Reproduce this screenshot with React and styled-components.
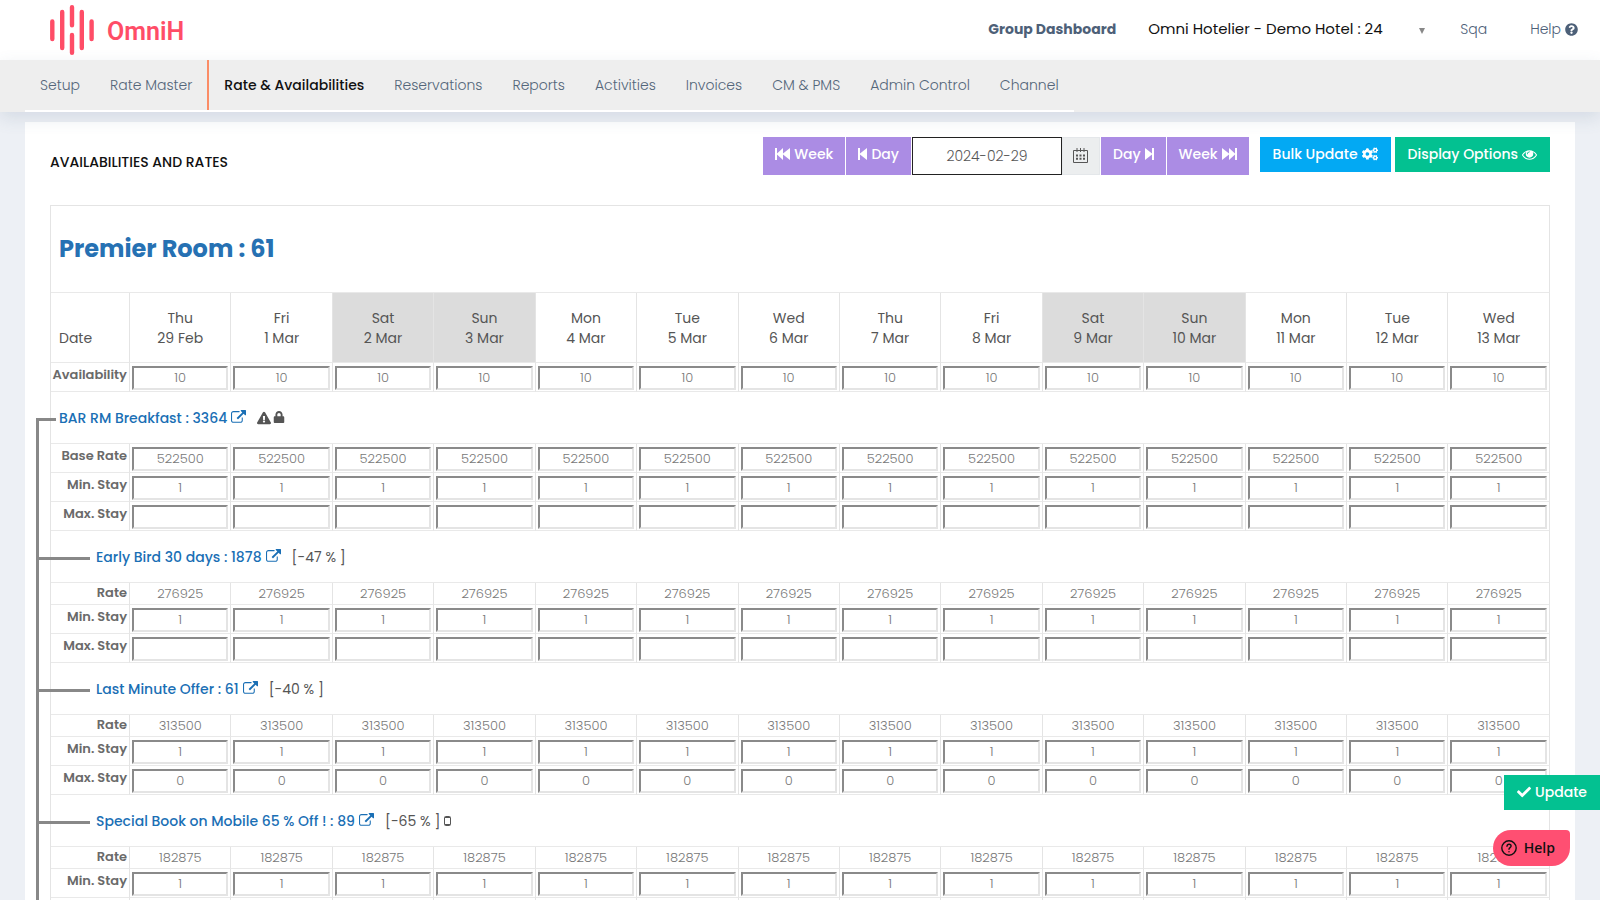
import React from 'react';
import styled, { createGlobalStyle } from 'styled-components';
import {
	FaCheck,
	FaCogs,
	FaExclamationTriangle,
	FaLock,
	FaQuestionCircle,
} from 'react-icons/fa';

const GlobalStyle = createGlobalStyle`
	* {
		box-sizing: border-box;
	}

	body {
		margin: 0;
		background: #edf0f5;
		color: #555;
		font-family: Poppins, Inter, 'Liberation Sans', sans-serif;
		font-size: 14px;
		line-height: 20px;
	}

	button, input, select {
		font: inherit;
	}

	a {
		color: inherit;
		text-decoration: none;
	}
`;

const Header = styled.header`
	display: flex;
	align-items: center;
	height: 60px;
	padding: 0 22px 0 50px;
	background: white;
	color: #4d6078;
`;

const Brand = styled.a`
	display: flex;
	align-items: center;
	gap: 13px;
	margin-right: auto;
	color: #ff4d67;
`;

const BrandName = styled.span`
	padding-top: 3px;
	font-family: Roboto, sans-serif;
	font-size: 25px;
	font-weight: 600;
`;

const HeaderLinks = styled.div`
	display: flex;
	align-items: center;
	padding-bottom: 2px;
`;

const HeaderLink = styled.a`
	display: flex;
	align-items: center;
	gap: 4px;
	margin-left: ${(props) => props.$gap}px;
	font-weight: ${(props) => (props.$strong ? 700 : 300)};
`;

const HotelPicker = styled.div`
	position: relative;
	width: 280px;
	margin-left: 32px;

	&::after {
		content: '';
		position: absolute;
		right: 3px;
		top: 9px;
		border: 3px solid transparent;
		border-top: 6px solid #888;
		border-bottom: 0;
	}
`;

const HotelSelect = styled.select`
	appearance: none;
	width: 100%;
	padding: 0;
	border: 0;
	background: transparent;
	color: #111;
	font-size: 15px;
`;

const Nav = styled.nav`
	position: relative;
	display: flex;
	padding: 0 25px;
	background: #eee;
	box-shadow: 0 6px 16px rgba(90, 110, 140, 0.16);
`;

const Tabs = styled.div`
	display: flex;
	border-bottom: 2px solid white;
`;

const Tab = styled.a`
	padding: 15px;
	color: ${(props) => (props.$active ? '#111' : '#54667a')};
	font-weight: ${(props) => (props.$active ? 500 : 300)};
	border-left: ${(props) => (props.$active ? '2px solid #fb8c66' : '0')};
`;

const Card = styled.main`
	margin: 10px 25px 0;
	padding: 15px 25px 25px;
	background: white;
`;

const Toolbar = styled.div`
	display: flex;
	align-items: flex-start;
	height: 68px;
`;

const PageTitle = styled.h1`
	margin: 15px auto 0 0;
	color: #111;
	font-size: 14px;
	font-weight: 500;
	text-transform: uppercase;
`;

const DateGroup = styled.div`
	display: flex;
	gap: 1px;
	margin-right: 11px;
`;

const ActionGroup = styled.div`
	display: flex;
	gap: 4px;
`;

const ToolButton = styled.button`
	display: flex;
	align-items: center;
	gap: 4px;
	height: 35px;
	padding: 0 13px 1px;
	border: 0;
	background: ${(props) => props.$color};
	color: white;
	font-weight: 500;
`;

const StepButton = styled(ToolButton)`
	height: 38px;
	padding: 0 12px 4px;
	background: #ab8ce4;
`;

const DateField = styled.div`
	display: flex;
`;

const DateInput = styled.input`
	width: 150px;
	border: 1px solid #222;
	background: white;
	color: #565656;
	font-weight: 300;
	text-align: center;
`;

const CalendarButton = styled.button`
	width: 38px;
	padding: 4px 0 0;
	border: 1px solid #e4e7ea;
	background: #eceeef;
	color: #565656;
`;

const Grid = styled.table`
	width: 100%;
	table-layout: fixed;
	border-spacing: 0;
	border-top: 1px solid #e4e4e4;
	border-left: 1px solid #e4e4e4;
`;

const LabelColumn = styled.col`
	width: 79px;
`;

const Cell = styled.td`
	padding: 0 2px;
	border-right: 1px solid #e4e4e4;
	border-bottom: 1px solid #e9e9e9;
`;

const TitleCell = styled(Cell)`
	height: 87px;
	padding: 0 8px;
`;

const RoomTitle = styled.h2`
	margin: 0;
	color: #2671b3;
	font-size: 24px;
	font-weight: 700;
`;

const DateCell = styled(Cell).attrs({ as: 'th' })`
	height: 70px;
	padding: 0 8px 14px;
	background: ${(props) => (props.$weekend ? '#dcdcdc' : 'white')};
	font-weight: 400;
	text-align: ${(props) => (props.$first ? 'left' : 'center')};
	vertical-align: bottom;
`;

const LabelCell = styled(Cell).attrs({ as: 'th' })`
	padding: ${(props) => (props.$plain ? 0 : '2px')} 2px 0 0;
	color: #6a6a6a;
	font-size: 13px;
	font-weight: 600;
	text-align: right;
	vertical-align: top;
	white-space: nowrap;
`;

const RateCell = styled(Cell)`
	height: 22px;
	color: #777;
	font-size: 13px;
	font-weight: 300;
	text-align: center;
`;

const InputCell = styled(Cell)`
	height: 29px;
	padding: 3px 2px 1px;
`;

const CellInput = styled.input`
	display: block;
	width: 100%;
	height: 24px;
	padding: 0;
	border: 2px solid;
	border-color: #8a8a8a #e4e4e4 #e4e4e4 #8a8a8a;
	background: white;
	color: #777;
	font-size: 13px;
	font-weight: 300;
	text-align: center;
`;

/* the vertical tree line runs beside every plan of the room */
const PlanGroup = styled.tbody`
	position: relative;

	&::before {
		content: '';
		position: absolute;
		left: -15px;
		top: ${(props) => (props.$root ? 26 : 0)}px;
		bottom: 0;
		width: 3px;
		background: #888;
	}
`;

const PlanCell = styled(Cell)`
	position: relative;
	height: 52px;
	padding: 0 0 0 ${(props) => (props.$root ? 8 : 45)}px;

	&::before {
		content: '';
		position: absolute;
		left: -15px;
		top: 26px;
		width: ${(props) => (props.$root ? 20 : 54)}px;
		height: 3px;
		background: #888;
	}
`;

const PlanLine = styled.div`
	display: flex;
	align-items: center;
	gap: 4px;
`;

const PlanLink = styled.a`
	display: flex;
	align-items: center;
	gap: 4px;
	margin-right: 7px;
	color: #1a6fb5;
	font-weight: 500;
`;

const PlanIcons = styled.span`
	display: flex;
	gap: 2px;
`;

const UpdateButton = styled.button`
	position: fixed;
	right: 0;
	bottom: 90px;
	display: flex;
	align-items: center;
	gap: 4px;
	height: 35px;
	padding: 0 13px 2px;
	border: 0;
	background: #03c191;
	color: white;
	font-weight: 500;
`;

const HelpButton = styled.button`
	position: fixed;
	right: 30px;
	bottom: 34px;
	display: flex;
	align-items: center;
	gap: 7px;
	height: 36px;
	padding: 0 15px 0 8px;
	border: 0;
	border-radius: 18px 4px 18px 18px;
	background: #ff4f72;
	color: #111;
	font-family: 'Open Sans', sans-serif;
	font-weight: 600;
`;

const tabs = [
	'Setup',
	'Rate Master',
	'Rate & Availabilities',
	'Reservations',
	'Reports',
	'Activities',
	'Invoices',
	'CM & PMS',
	'Admin Control',
	'Channel',
];

const days = [
	['Thu', '29 Feb'],
	['Fri', '1 Mar'],
	['Sat', '2 Mar'],
	['Sun', '3 Mar'],
	['Mon', '4 Mar'],
	['Tue', '5 Mar'],
	['Wed', '6 Mar'],
	['Thu', '7 Mar'],
	['Fri', '8 Mar'],
	['Sat', '9 Mar'],
	['Sun', '10 Mar'],
	['Mon', '11 Mar'],
	['Tue', '12 Mar'],
	['Wed', '13 Mar'],
];

const plans = [
	{ name: 'BAR RM Breakfast : 3364', root: true, rate: '522500', max: '' },
	{ name: 'Early Bird 30 days : 1878', discount: '[-47 % ]', rate: '276925', max: '' },
	{ name: 'Last Minute Offer : 61', discount: '[-40 % ]', rate: '313500', max: '0' },
	{
		name: 'Special Book on Mobile 65 % Off ! : 89',
		discount: '[-65 % ]',
		mobile: true,
		rate: '182875',
		max: '',
	},
];

function Logo() {
	return (
		<svg width="44" height="50" viewBox="0 0 44 50" stroke="currentColor" strokeWidth="4.4" strokeLinecap="round" aria-hidden="true">
			<path d="M2.3 16.5V34M12.2 7v36M22 2.3v18M22 30v17.7M31.8 7v36M41.6 16.5V34" />
		</svg>
	);
}

function ExternalIcon() {
	return (
		<svg width="15" height="15" viewBox="0 0 1792 1792" fill="currentColor" aria-hidden="true">
			<path d="M1408 928v320q0 119-84.5 203.5t-203.5 84.5h-832q-119 0-203.5-84.5t-84.5-203.5v-832q0-119 84.5-203.5t203.5-84.5h704q14 0 23 9t9 23v64q0 14-9 23t-23 9h-704q-66 0-113 47t-47 113v832q0 66 47 113t113 47h832q66 0 113-47t47-113v-320q0-14 9-23t23-9h64q14 0 23 9t9 23zm384-864v512q0 26-19 45t-45 19-45-19l-176-176-652 652q-10 10-23 10t-23-10l-114-114q-10-10-10-23t10-23l652-652-176-176q-19-19-19-45t19-45 45-19h512q26 0 45 19t19 45z" />
		</svg>
	);
}

function EyeIcon() {
	return (
		<svg width="15" height="15" viewBox="0 0 1792 1792" fill="currentColor" aria-hidden="true">
			<path d="M1664 960q-152-236-381-353 61 104 61 225 0 185-131.5 316.5t-316.5 131.5-316.5-131.5-131.5-316.5q0-121 61-225-229 117-381 353 133 205 333.5 326.5t434.5 121.5 434.5-121.5 333.5-326.5zm-720-384q0-20-14-34t-34-14q-125 0-214.5 89.5t-89.5 214.5q0 20 14 34t34 14 34-14 14-34q0-86 61-147t147-61q20 0 34-14t14-34zm848 384q0 34-20 69-140 230-376.5 368.5t-499.5 138.5-499.5-139-376.5-368q-20-35-20-69t20-69q140-229 376.5-368t499.5-139 499.5 139 376.5 368q20 35 20 69z" />
		</svg>
	);
}

function WeekBackIcon() {
	return (
		<svg width="15" height="12" viewBox="0 0 15 12" fill="currentColor" aria-hidden="true">
			<path d="M0 0h2v5.5L8 0v5.5L15 0v12L8 6.5V12L2 6.5V12H0z" />
		</svg>
	);
}

function DayBackIcon() {
	return (
		<svg width="9" height="12" viewBox="0 0 9 12" fill="currentColor" aria-hidden="true">
			<path d="M0 0h2v5.5L9 0v12L2 6.5V12H0z" />
		</svg>
	);
}

function DayForwardIcon() {
	return (
		<svg width="9" height="12" viewBox="0 0 9 12" fill="currentColor" aria-hidden="true">
			<path d="M9 0H7v5.5L0 0v12l7-5.5V12h2z" />
		</svg>
	);
}

function WeekForwardIcon() {
	return (
		<svg width="15" height="12" viewBox="0 0 15 12" fill="currentColor" aria-hidden="true">
			<path d="M15 0h-2v5.5L7 0v5.5L0 0v12l7-5.5V12l6-5.5V12h2z" />
		</svg>
	);
}

function CalendarIcon() {
	return (
		<svg width="15" height="15" viewBox="0 0 15 15" fill="none" stroke="currentColor" aria-hidden="true">
			<path d="M.5 2.5h14v12H.5zM4 0v4M7.5 0v4M11 0v4" />
			<path d="M3 7.5h9M3 10.8h9" strokeWidth="2" strokeDasharray="2 1.5" />
		</svg>
	);
}

function MobileIcon() {
	return (
		<svg width="7" height="10" viewBox="0 0 7 10" fill="none" stroke="currentColor" aria-hidden="true">
			<rect x=".5" y=".5" width="6" height="9" rx="1" />
			<path d="M1 1.5h5M1 8.5h5" />
		</svg>
	);
}

function HelpIcon() {
	return (
		<svg width="16" height="16" viewBox="0 0 16 16" fill="none" stroke="currentColor" strokeWidth="1.4" strokeLinecap="round" aria-hidden="true">
			<circle cx="8" cy="8" r="7.2" />
			<path d="M6 6.3c.1-1.3 1-2 2.1-2s2 .8 2 1.8c0 1.5-2.1 1.5-2.1 3.1M8 11.6v.1" />
		</svg>
	);
}

function InputRow({ label, plan, value }) {
	return (
		<tr>
			<LabelCell scope="row">{label}</LabelCell>
			{days.map(([, date]) => (
				<InputCell key={date}>
					<CellInput aria-label={`${plan} ${label} ${date}`} defaultValue={value} />
				</InputCell>
			))}
		</tr>
	);
}

function Plan({ name, root, discount, mobile, rate, max }) {
	return (
		<PlanGroup $root={root}>
			<tr>
				<PlanCell colSpan={15} $root={root}>
					<PlanLine>
						<PlanLink href="#plan">
							{name}
							<ExternalIcon />
						</PlanLink>
						{root && (
							<PlanIcons>
								<FaExclamationTriangle size={14} />
								<FaLock size={12} />
							</PlanIcons>
						)}
						{discount}
						{mobile && <MobileIcon />}
					</PlanLine>
				</PlanCell>
			</tr>
			{root ? (
				<InputRow label="Base Rate" plan={name} value={rate} />
			) : (
				<tr>
					<LabelCell scope="row" $plain>
						Rate
					</LabelCell>
					{days.map(([, date]) => (
						<RateCell key={date}>{rate}</RateCell>
					))}
				</tr>
			)}
			<InputRow label="Min. Stay" plan={name} value="1" />
			<InputRow label="Max. Stay" plan={name} value={max} />
		</PlanGroup>
	);
}

export default function App() {
	return (
		<>
			<GlobalStyle />
			<Header>
				<Brand href="#home">
					<Logo />
					<BrandName>OmniH</BrandName>
				</Brand>
				<HeaderLinks>
					<HeaderLink href="#group" $strong>
						Group Dashboard
					</HeaderLink>
					<HotelPicker>
						<HotelSelect aria-label="Hotel">
							<option>Omni Hotelier - Demo Hotel : 24</option>
						</HotelSelect>
					</HotelPicker>
					<HeaderLink href="#account" $gap={32}>
						Sqa
					</HeaderLink>
					<HeaderLink href="#help" $gap={43}>
						Help <FaQuestionCircle size={13} />
					</HeaderLink>
				</HeaderLinks>
			</Header>
			<Nav>
				<Tabs>
					{tabs.map((tab) => (
						<Tab key={tab} href="#tab" $active={tab === 'Rate & Availabilities'}>
							{tab}
						</Tab>
					))}
				</Tabs>
			</Nav>
			<Card>
				<Toolbar>
					<PageTitle>Availabilities and Rates</PageTitle>
					<DateGroup>
						<StepButton>
							<WeekBackIcon /> Week
						</StepButton>
						<StepButton>
							<DayBackIcon /> Day
						</StepButton>
						<DateField>
							<DateInput aria-label="Start date" defaultValue="2024-02-29" />
							<CalendarButton aria-label="Open calendar">
								<CalendarIcon />
							</CalendarButton>
						</DateField>
						<StepButton>
							Day <DayForwardIcon />
						</StepButton>
						<StepButton>
							Week <WeekForwardIcon />
						</StepButton>
					</DateGroup>
					<ActionGroup>
						<ToolButton $color="#03a9f3">
							Bulk Update <FaCogs size={16} />
						</ToolButton>
						<ToolButton $color="#03c191">
							Display Options <EyeIcon />
						</ToolButton>
					</ActionGroup>
				</Toolbar>
				<Grid>
					<colgroup>
						<LabelColumn />
						<col span={14} />
					</colgroup>
					<tbody>
						<tr>
							<TitleCell colSpan={15}>
								<RoomTitle>Premier Room : 61</RoomTitle>
							</TitleCell>
						</tr>
						<tr>
							<DateCell $first>Date</DateCell>
							{days.map(([day, date]) => (
								<DateCell key={date} $weekend={day === 'Sat' || day === 'Sun'}>
									{day}
									<br />
									{date}
								</DateCell>
							))}
						</tr>
						<InputRow label="Availability" plan="Premier Room" value="10" />
					</tbody>
					{plans.map((plan) => (
						<Plan key={plan.name} {...plan} />
					))}
				</Grid>
			</Card>
			<UpdateButton>
				<FaCheck size={14} /> Update
			</UpdateButton>
			<HelpButton>
				<HelpIcon /> Help
			</HelpButton>
		</>
	);
}
